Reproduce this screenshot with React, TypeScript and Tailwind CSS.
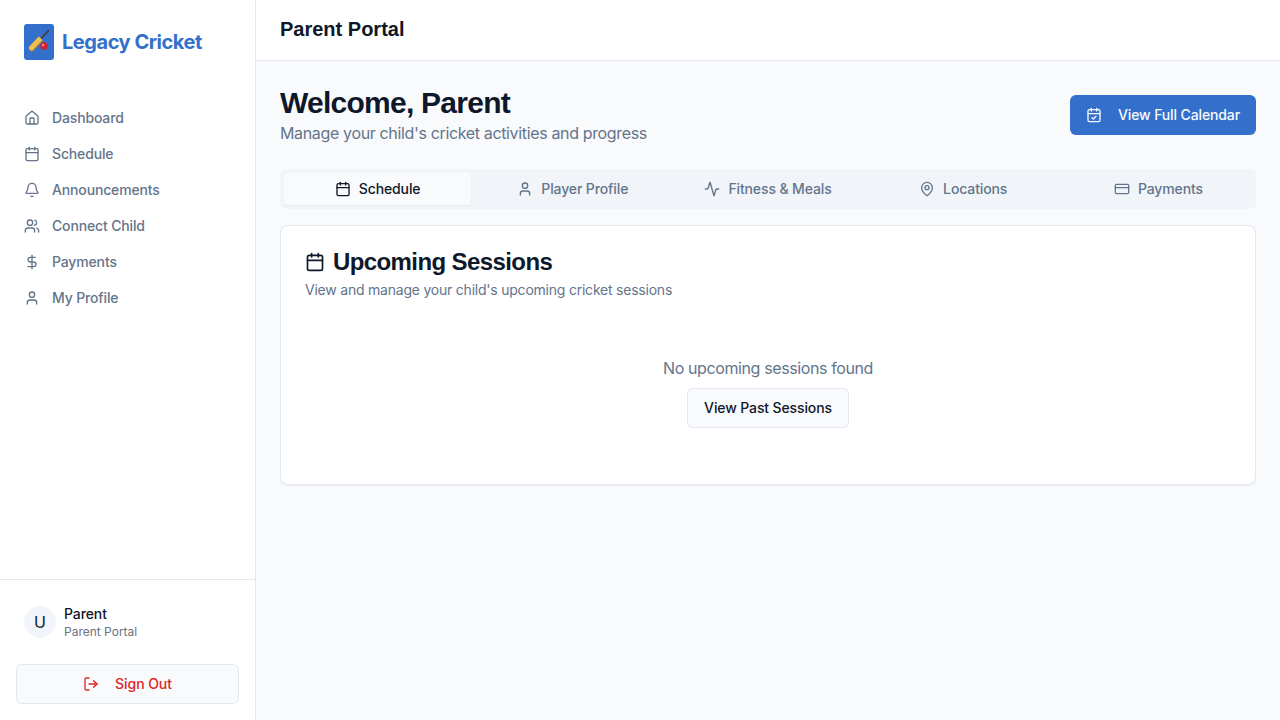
import { Activity, Bell, Calendar, CalendarCheck, CreditCard, DollarSign, House, LogOut, MapPin, User, Users } from "lucide-react";

const nav = [
  { label: "Dashboard", Icon: House },
  { label: "Schedule", Icon: Calendar },
  { label: "Announcements", Icon: Bell },
  { label: "Connect Child", Icon: Users },
  { label: "Payments", Icon: DollarSign },
  { label: "My Profile", Icon: User },
];

const tabs = [
  { label: "Schedule", Icon: Calendar },
  { label: "Player Profile", Icon: User },
  { label: "Fitness & Meals", Icon: Activity },
  { label: "Locations", Icon: MapPin },
  { label: "Payments", Icon: CreditCard },
];

function Logo() {
  return (
    <svg width="30" height="36" viewBox="0 0 30 36">
      <rect width="30" height="36" rx="3" fill="#3370cb" />
      <path d="M17.5 14 L24.3 6.8" stroke="#3f3b45" strokeWidth="1.8" strokeLinecap="round" />
      <path d="M14.8 12.6 L18.8 16.8 L9.6 26.6 Q8.2 28 6.6 27 L5 25.4 Q4.2 23.8 5.6 22.2 Z" fill="#b98a2c" />
      <path d="M14.8 12.6 L18.3 16.1 L8.8 25.9 Q7.4 27.1 6 25.8 L5.2 24.8 Q4.6 23.4 5.8 22 Z" fill="#edc04a" />
      <circle cx="20" cy="22" r="3.8" fill="#d3202f" />
      <circle cx="19.2" cy="21" r="1.3" fill="#f98a8a" />
    </svg>
  );
}

export default function App() {
  return (
    <div className="flex h-screen overflow-hidden bg-[#f9fafc] font-['Inter',sans-serif] text-[#0f172a]">
      <aside className="flex w-64 shrink-0 flex-col border-r border-[#e2e8f0] bg-white">
        <div className="flex items-center gap-2 p-6">
          <Logo />
          <span className="text-xl leading-7 font-bold tracking-[-0.46px] text-[#3370cb]">Legacy Cricket</span>
        </div>
        <nav className="flex-1 px-3 pt-4">
          {nav.map(({ label, Icon }) => (
            <a key={label} className="flex h-9 items-center gap-3 px-3 text-sm font-medium tracking-[-0.15px] text-[#64748b]">
              <Icon size={16} />
              {label}
            </a>
          ))}
        </nav>
        <div className="border-t border-[#e2e8f0] p-4">
          <div className="mb-6 flex items-center gap-2 px-2 pt-2">
            <div className="flex size-8 items-center justify-center rounded-full bg-[#f1f5f9]">U</div>
            <div>
              <p className="text-sm font-medium tracking-[-0.1px]">Parent</p>
              <p className="text-xs text-[#6b7280]">Parent Portal</p>
            </div>
          </div>
          <button className="flex h-10 w-full items-center justify-center gap-4 rounded-md border border-[#e2e8f0] bg-[#f9fafc] text-sm font-medium tracking-[-0.05px] text-[#dc2626]">
            <LogOut size={16} />
            Sign Out
          </button>
        </div>
      </aside>
      <div className="flex flex-1 flex-col">
        <header className="h-[61px] border-b border-[#e2e8f0] bg-white px-6 pt-[15px]">
          <h1 className="font-['Liberation_Sans',sans-serif] text-xl font-bold">Parent Portal</h1>
        </header>
        <main className="p-6">
          <div className="flex items-center justify-between">
            <div>
              <h2 className="font-['Liberation_Sans',sans-serif] text-3xl font-bold tracking-tight">Welcome, Parent</h2>
              <p className="tracking-[-0.35px] text-[#64748b]">Manage your child's cricket activities and progress</p>
            </div>
            <button className="flex h-10 items-center gap-4 rounded-md bg-[#3370cb] px-4 text-sm font-medium tracking-[-0.12px] text-[#f8fafc]">
              <CalendarCheck size={16} />
              View Full Calendar
            </button>
          </div>
          <div className="mt-6 grid h-10 grid-cols-5 gap-2 rounded-md bg-[#f1f5f9] p-1 text-sm font-medium tracking-[-0.12px] text-[#64748b]">
            {tabs.map(({ label, Icon }, i) => (
              <button key={label} className={i === 0 ? "flex items-center justify-center gap-2 rounded-sm bg-[#f9fafc] text-[#0f172a] shadow-xs" : "flex items-center justify-center gap-2"}>
                <Icon size={16} />
                {label}
              </button>
            ))}
          </div>
          <section className="mt-4 h-[260px] rounded-lg border border-[#e2e8f0] bg-white p-6 shadow-xs">
            <h3 className="flex items-center gap-2 font-['Liberation_Sans',sans-serif] text-2xl leading-6 font-bold tracking-tight">
              <Calendar size={20} />
              Upcoming Sessions
            </h3>
            <p className="mt-1.5 text-sm tracking-[-0.22px] text-[#64748b]">View and manage your child's upcoming cricket sessions</p>
            <div className="mt-14 flex flex-col items-center gap-2">
              <p className="tracking-[-0.39px] text-[#64748b]">No upcoming sessions found</p>
              <button className="h-10 rounded-md border border-[#e2e8f0] bg-[#f9fafc] px-4 text-sm font-medium tracking-[-0.12px]">View Past Sessions</button>
            </div>
          </section>
        </main>
      </div>
    </div>
  );
}
